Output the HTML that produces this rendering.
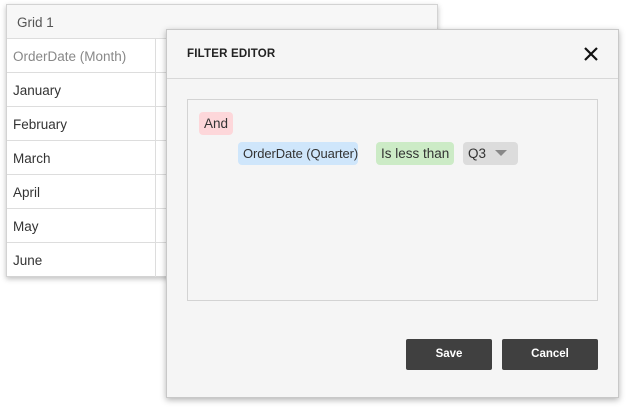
<!DOCTYPE html>
<html><head><style>
*{box-sizing:border-box;margin:0;padding:0}
body{width:629px;height:409px;background:#fff;position:relative;overflow:hidden;font-family:"Liberation Sans",sans-serif;font-size:13.5px;color:#333}
.grid{position:absolute;left:6px;top:4px;width:432px;height:273px;border:1px solid #d3d3d3;background:#fff;box-shadow:0 2px 5px rgba(0,0,0,.25)}
.gh{height:34px;background:#f7f7f7;border-bottom:1px solid #ddd;padding:10px 10px;color:#555}
.row{position:relative;height:34px;border-bottom:1px solid #ddd;padding:10px 6px}
.row:after{content:"";position:absolute;left:148px;top:0;bottom:0;border-left:1px solid #ddd}
.row.h{color:#888}
.dlg{position:absolute;left:166px;top:29px;width:453px;height:369px;background:#f5f5f5;border:1px solid #c8c8c8;box-shadow:0 2px 6px rgba(0,0,0,.3)}
.dh{height:49px;border-bottom:1px solid #d8d8d8;padding:18px 20px;font-weight:bold;font-size:11.5px;color:#222;letter-spacing:.2px}
.x{position:absolute;right:20px;top:17px;width:14px;height:14px}
.box{position:absolute;left:20px;top:69px;width:411px;height:202px;border:1px solid #d3d3d3}
.chip{position:absolute;height:23px;border-radius:4px;padding:4px 5px 0;font-size:13.5px;color:#333;white-space:nowrap;overflow:hidden}
.btn{position:absolute;top:309px;height:31px;background:#404040;border-radius:2px;color:#fff;font-weight:bold;font-size:11.5px;text-align:center;line-height:31px}
</style></head><body>
<div class="grid">
<div class="gh">Grid 1</div>
<div class="row h">OrderDate (Month)</div>
<div class="row">January</div>
<div class="row">February</div>
<div class="row">March</div>
<div class="row">April</div>
<div class="row">May</div>
<div class="row" style="border-bottom:none">June</div>
</div>
<div class="dlg">
<div class="dh">FILTER EDITOR</div>
<svg class="x" viewBox="0 0 14 14"><path d="M1 1L13 13M13 1L1 13" stroke="#111" stroke-width="2.2"/></svg>
<div class="box">
<div class="chip" style="left:11px;top:12px;background:#fdd7da">And</div>
<div class="chip" style="left:50px;top:42px;width:120px;font-size:13px;letter-spacing:-.1px;background:#cfe6fb">OrderDate (Quarter)</div>
<div class="chip" style="left:188px;top:42px;width:78px;background:#ccebc6">Is less than</div>
<div class="chip" style="left:275px;top:42px;width:55px;background:#dcdcdc">Q3<svg style="position:absolute;left:32px;top:8px" width="12" height="7" viewBox="0 0 12 7"><path d="M0 0H12L6 6Z" fill="#888"/></svg></div>
</div>
<div class="btn" style="left:239px;width:86px">Save</div>
<div class="btn" style="left:335px;width:96px">Cancel</div>
</div>
</body></html>
